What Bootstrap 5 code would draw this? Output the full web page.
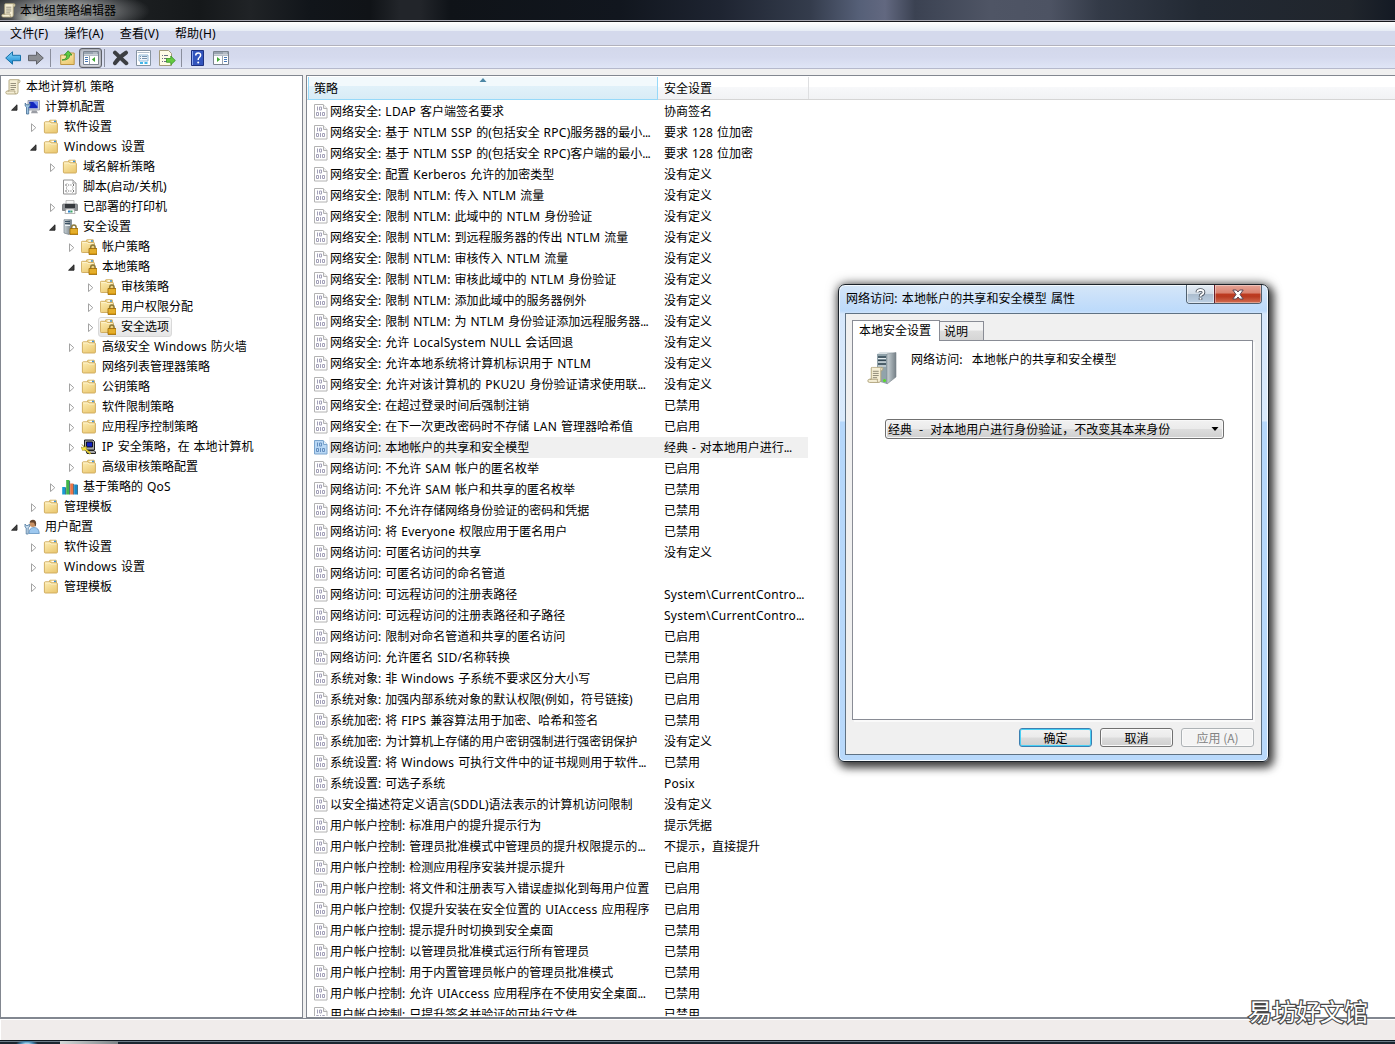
<!DOCTYPE html>
<html lang="zh-CN">

<head>
  <meta charset="UTF-8">
  <meta name="viewport" content="width=device-width, initial-scale=1.0">
  <title>本地组策略编辑器</title>
  <link href="https://cdn.jsdelivr.net/npm/bootstrap@5.3.2/dist/css/bootstrap.min.css" rel="stylesheet">
  <style>
    body {
      height: 1044px;
      overflow: hidden;
      background-color: #f0f0f0;
      color: #000;
      font-family: "Noto Sans", "Noto Sans CJK SC", sans-serif;
      font-size: 12px;
      line-height: 20px;
    }

    svg {
      display: block;
      flex: none;
    }

    .latin {
      letter-spacing: .25px;
      word-spacing: .5px;
    }

    .dots {
      letter-spacing: -.6px;
    }

    /* title bar */
    .titlebar {
      height: 22px;
      padding-left: 1px;
      border-bottom: 1px solid #15161c;
      box-shadow: inset 0 -1px #a3a3ad;
      background:
        radial-gradient(ellipse 20px 12px at 32px 20px, rgba(225, 230, 215, .75), transparent),
        radial-gradient(ellipse 85px 22px at 65px 11px, rgba(145, 147, 148, .95) 35%, rgba(110, 112, 115, .5) 75%, transparent),
        linear-gradient(90deg, #25282b 0, #1b1e20 140px, #15181a 200px, #202326 250px, #11151a 310px, #101317 370px, #22252a 400px, #22252a 420px, #0f1318 450px, #11161e 620px, #1e2431 720px, #343c4c 810px, #566078 860px, #626880 885px, #3b4252 915px, #4f5565 990px, #4d5363 1050px, #333a47 1100px, #222933 1200px, #20252c 1350px, #141a24 1395px);
    }

    .menubar {
      height: 25px;
      padding: 2px 0 0 10px;
      gap: 16px;
      letter-spacing: .15px;
      background: linear-gradient(#fff 0, #e6ecf5 9px, #d4d9ec 9px, #d4d9ec 100%);
      border-bottom: 1px solid #fff;
      box-shadow: inset 0 -1px #b2b2bc;
    }

    .toolbar {
      height: 22px;
      padding-left: 5px;
      background: linear-gradient(#d3d8eb, #d5daee 50%, #dfe5f6);
      border-bottom: 1px solid #b5b9cc;
    }

    .toolbar .divider {
      width: 1px;
      height: 18px;
      background-color: #8a8e9c;
    }

    .pressed {
      width: 23px;
      height: 20px;
      border: 1px solid #5d6068;
      border-radius: 3px;
      background: linear-gradient(#bcc0cc, #d9dce5);
      box-shadow: inset 0 0 2px #777;
    }

    /* panes */
    .panes {
      height: 949px;
      padding-top: 6px;
      gap: 3px;
    }

    .pane {
      background-color: #fff;
      border: 1px solid #828790;
      overflow: hidden;
    }

    .tree-pane {
      width: 303px;
      padding: 1px 0 0 4px;
    }

    .tree-row {
      height: 20px;
    }

    .tree-label {
      padding: 0 3px 0 5px;
    }

    .twisty {
      width: 9px;
      height: 9px;
      margin-right: 5px;
      margin-left: 1px;
    }

    .tree-sel {
      height: 20px;
      margin-left: -2px;
      padding-left: 1px;
      border: 1px solid #d9d9d9;
      border-radius: 3px;
      background: linear-gradient(#fafafa, #e5e5e5);
    }

    .tree-sel .tree-label {
      padding-right: 2px;
      line-height: 18px;
    }

    .list-pane {
      padding-top: 1px;
      border-right: 0;
    }

    .list-head {
      height: 23px;
      line-height: 23px;
      padding-left: 1px;
      background: linear-gradient(#fff 45%, #f7f8fa 45%, #f1f2f4);
      border-bottom: 1px solid #d5d5d5;
    }

    .head-policy {
      width: 350px;
      height: 23px;
      padding-left: 5px;
      background: linear-gradient(#f2f9fc 0, #f2f9fc 42%, #e1f1f9 42%, #d8ecf6);
      border: solid #96d9f9;
      border-width: 0 1px 1px;
    }

    .head-policy svg {
      top: 1px;
      left: 170px;
    }

    .head-setting {
      width: 151px;
      padding-left: 6px;
      border-right: 1px solid #dedfe1;
    }

    .list-body {
      height: 916px;
      padding-top: 1px;
      overflow: hidden;
    }

    .list-row {
      height: 21px;
      line-height: 21px;
      width: 501px;
      padding-left: 7px;
      white-space: nowrap;
    }

    .list-row .cell-fill {
      margin-left: 1px;
    }

    .list-row .policy {
      width: 335px;
      padding-left: 1px;
    }

    .list-row.chosen .cell-fill {
      background-color: #f0f0f0;
    }

    .statusbar {
      height: 22px;
      background-color: #f0eceb;
      border-top: 1px solid #828790;
      box-shadow: inset 0 1px #fff, inset 1px 0 #fff;
    }

    .taskbar {
      height: 4px;
      background: linear-gradient(#111820 0, #111820 1px, #8595a3 1px, #53616e 2px, #1b2630 2px);
    }

    .taskbar .orb {
      width: 22px;
      height: 3px;
      margin-left: 16px;
      background: radial-gradient(ellipse 11px 4px at 11px 3px, #9fd0ea 20%, #3f7ea8 60%, transparent);
    }

    .taskbar .task {
      width: 58px;
      height: 3px;
      margin-left: 22px;
      background: linear-gradient(90deg, #d5d8d8, #7b8387);
    }

    /* properties window */
    .props {
      position: absolute;
      left: 838px;
      top: 284px;
      width: 431px;
      height: 478px;
      padding: 0 6px 6px;
      border: 1px solid #1b2229;
      border-radius: 7px 7px 6px 6px;
      background: linear-gradient(90deg, transparent 0, transparent 8px, rgba(255, 255, 255, .3) 100px, transparent 230px) 0 0 / 100% 29px no-repeat,
        linear-gradient(#d5e6f8 0, #bcdafb 26px, #d6e7fb 29px, #d9eafc 136px, #b5d7fb 137px, #b9d9fb 100%);
      box-shadow: inset 0 0 0 1px #f4faff, 3px 4px 9px 2px rgba(0, 0, 0, .65), 0 0 12px rgba(0, 0, 0, .5);
    }

    .props-title {
      height: 28px;
      padding-left: 1px;
      line-height: 28px;
      letter-spacing: .08px;
      word-spacing: 1px;
    }

    .caption-btns {
      height: 19px;
      border: 1px solid #50606f;
      border-top: 0;
      border-radius: 0 0 4px 4px;
      overflow: hidden;
    }

    .cap-help {
      width: 27px;
      background: linear-gradient(#e5edf5 0, #d2dce7 48%, #abbccd 50%, #bdd0e4);
      box-shadow: inset 0 0 0 1px rgba(255, 255, 255, .5);
    }

    .cap-close {
      width: 47px;
      border-left: 1px solid #68202a;
      background: linear-gradient(#e6a497 0, #d9826f 45%, #bd3a20 50%, #b93b22 65%, #d36e52);
      box-shadow: inset 0 0 0 1px rgba(255, 255, 255, .35);
    }

    .props-body {
      height: 442px;
      padding: 6px 8px 0 6px;
      border: 1px solid #5f7284;
      background-color: #f0f0f0;
      font-family: "Noto Sans CJK SC", sans-serif;
    }

    .sheet-tab {
      height: 20px;
      line-height: 18px;
      border: 1px solid #898c95;
      border-bottom: 0;
    }

    .tab-on {
      width: 88px;
      height: 21px;
      margin-bottom: -1px;
      padding-left: 6px;
      background-color: #fff;
      z-index: 1;
    }

    .tab-off {
      width: 44px;
      height: 19px;
      padding-left: 4px;
      border-left: 0;
      background: linear-gradient(#f3f3f3 45%, #dedede 50%, #d5d5d5);
    }

    .sheet {
      width: 401px;
      height: 380px;
      padding: 10px 0 0 14px;
      border: 1px solid #898c95;
      background-color: #fff;
      box-shadow: 2px 2px #fafafa;
    }

    .combo {
      width: 339px;
      height: 20px;
      margin: 34px 0 0 18px;
      padding: 0 4px 0 2px;
      line-height: 18px;
      border: 1px solid #707070;
      border-radius: 3px;
      background: linear-gradient(#f2f2f2 0, #ebebeb 48%, #dcdcdc 52%, #cfcfcf);
      word-spacing: 4.4px;
      box-shadow: inset 0 0 0 1px #f8f8f8;
    }

    .dlg-btn {
      --bs-btn-padding-x: 0;
      --bs-btn-padding-y: 0;
      --bs-btn-font-size: 12px;
      --bs-btn-border-radius: 3px;
      --bs-btn-border-color: #707070;
      --bs-btn-color: #000;
      --bs-btn-disabled-color: #838383;
      --bs-btn-disabled-border-color: #adb2b5;
      --bs-btn-disabled-opacity: 1;
      width: 73px;
      height: 19px;
      line-height: 16px;
      background: linear-gradient(#f2f2f2 0, #ebebeb 48%, #dcdcdc 52%, #cfcfcf);
      box-shadow: inset 0 0 0 1px #fafafa;
    }

    .dlg-btn.is-default {
      border-color: #3c7fb1;
      box-shadow: inset 0 0 0 1px #48d0f5;
    }

    .dlg-btn:disabled {
      background: #f4f4f4;
    }

    .watermark {
      position: absolute;
      left: 1248px;
      top: 993px;
      font: 24px/36px "Noto Sans CJK SC", sans-serif;
      color: #fff;
      -webkit-text-stroke: 2.4px #4a4a4a;
      paint-order: stroke fill;
    }
  </style>
</head>

<body>
  <svg width="0" height="0" class="position-absolute">
    <defs>
      <linearGradient id="gFolder" x1="0" y1="0" x2="0.6" y2="1">
        <stop offset="0" stop-color="#fdeeb5" />
        <stop offset="1" stop-color="#eccb76" />
      </linearGradient>
      <linearGradient id="gServer" x1="0" x2="1">
        <stop offset="0" stop-color="#c9d2d6" />
        <stop offset="1" stop-color="#758087" />
      </linearGradient>
      <linearGradient id="gBlue" x1="0" y1="0" x2="0" y2="1">
        <stop offset="0" stop-color="#8ad6fa" />
        <stop offset="1" stop-color="#1287d0" />
      </linearGradient>
    </defs>
    <symbol id="i-scroll" viewBox="0 0 16 16">
      <path d="M4 1.500Q4 .7 5 .7h8.500q1.500 0 1.500 1.500T13.500 4H13v9q0 2-2 2H2.500Q.8 15 .8 13.500T2.500 12H4z" fill="#f5eed5" stroke="#b0a57d" stroke-width=".9" />
      <path d="M2.500 12H10q-.8 1.500.5 3M13 4V2q0-1 1-1" fill="none" stroke="#a69b76" stroke-width=".8" />
      <path d="M5.500 4.500h5.500M5.500 6.500h5.500M5.500 8.500h5.500M5.500 10.500h4" stroke="#8c8674" stroke-width=".9" />
    </symbol>
    <symbol id="i-folder" viewBox="0 0 16 16">
      <path d="M6.500 4V1.800q0-.6.600-.6h5.800q.6 0 .6.600V5h-7z" fill="#f3d98c" stroke="#cda95a" stroke-width=".8" />
      <path d="M8.500 2.500h2.500" stroke="#fff" stroke-width="1.400" />
      <path d="M11 2.500h2" stroke="#3f95dd" stroke-width="1.400" />
      <path d="M1.400 3.700q0-.9.900-.9h4.400q.5 0 .9.600t.9.500h5q.9 0 .9.900v8.300q0 .9-.9.900H2.300q-.9 0-.9-.9z" fill="url(#gFolder)" stroke="#cda757" stroke-width=".9" />
      <path d="M2.200 4h4.500l1.300 1h5.500" stroke="#fff8dc" fill="none" stroke-width=".7" />
    </symbol>
    <symbol id="i-lock" viewBox="0 0 16 16">
      <path d="M9.700 10V8.300q0-2.300 2.200-2.300t2.200 2.300V10" fill="none" stroke="#8d7b3e" stroke-width="1.500" />
      <path d="M8 9.500h8V15.500H8z" fill="#d99b12" stroke="#9a6a07" stroke-width=".8" />
      <path d="M8.500 11h7M8.500 13h7" stroke="#f6cd54" stroke-width=".8" />
    </symbol>
    <symbol id="i-lockfolder" viewBox="0 0 16 16">
      <use href="#i-folder" x="-1" y="-.5" width="16" height="16" />
      <use href="#i-lock" />
    </symbol>
    <symbol id="i-server" viewBox="0 0 16 16">
      <path d="M2 .7h7.500V14L7 15.500 2 14z" fill="url(#gServer)" stroke="#73808a" stroke-width=".7" />
      <path d="M3 2.500h5M3 4.500h5" stroke="#3d5264" />
      <path d="M3 6.500h5" stroke="#eef4f8" />
      <use href="#i-lock" />
    </symbol>
    <symbol id="i-computer" viewBox="0 0 16 16">
      <path d="M4 1.500h11.500v9.500H4z" fill="#d2d6df" stroke="#8b909d" stroke-width=".8" />
      <path d="M5.200 2.700h8.500v6.600H5.200z" fill="#1326bd" />
      <path d="M9 2.700h4.700v5z" fill="#6e8df0" />
      <path d="M8 11.500h4.500l1.500 2.700H7z" fill="#9a9da4" />
      <path d="M1.200 4v3l1.300 1.200V15h2.200V8.200L6 7V4L4.700 5.800H2.500z" fill="#9fc5e4" stroke="#426b90" stroke-width=".8" />
    </symbol>
    <symbol id="i-user" viewBox="0 0 16 16">
      <path d="M5 14.500q0-6 5-6t5.300 6z" fill="#9dc8ef" stroke="#5286b8" stroke-width=".7" />
      <circle cx="8.800" cy="4.800" r="3.200" fill="#c99163" />
      <path d="M5.700 3.500Q6 .8 9 .8t3.200 4q0 2-1.200 3 .2-3.500-1.500-4.300z" fill="#64442c" />
      <path d="M1 5v3l1.200 1V15h2V9L5.400 8V5L4.200 6.500h-2z" fill="#c5dcef" stroke="#51799d" stroke-width=".8" />
    </symbol>
    <symbol id="i-script" viewBox="0 0 16 16">
      <path d="M1.500 1h9.500l3 3v11H1.500z" fill="#fff" stroke="#929292" />
      <path d="M11 1v3h3" fill="#e9e9e9" stroke="#929292" stroke-width=".8" />
      <path d="M5 4.500L3.500 6 5 7.500M10.500 4.500L12 6l-1.500 1.500M6 6h1.200M8.300 6h1.200M5 10.500L3.500 12 5 13.500M10.500 10.500L12 12l-1.500 1.500M6 12h1.200M8.300 12h1.200M4 9h1M10.500 9h1" fill="none" stroke="#777" />
    </symbol>
    <symbol id="i-printer" viewBox="0 0 16 16">
      <path d="M4 1.500h8V6H4z" fill="#f5f5f5" stroke="#a7a7a7" stroke-width=".7" />
      <path d="M.5 6q0-1 1-1h13q1 0 1 1v5.500H.5z" fill="#8d9094" stroke="#66686c" stroke-width=".7" />
      <path d="M3 5h10v4H3z" fill="#36393d" />
      <path d="M4 10h8l1 4.500H3z" fill="#fff" stroke="#999" stroke-width=".7" />
      <path d="M6 11.500h2.500v2H6z" fill="#2a83c5" />
      <path d="M8.500 11.500h2v2h-2z" fill="#3fa661" />
    </symbol>
    <symbol id="i-ipsec" viewBox="0 0 16 16">
      <path d="M3.500 1h8.500l1.500 1.500V11h-10z" fill="#a5a5a5" stroke="#222" />
      <path d="M5.500 3h6v5h-6z" fill="#1322c0" stroke="#000" stroke-width=".8" />
      <path d="M5 11.500h8l1.500 1.500v1.500H6z" fill="#aaa" stroke="#222" />
      <path d="M1 5.500L3.500 8l2-.5-.5 2.200 5 4.500-1 1-5-4.200-2.500.5L.2 8l2 1 .8-1z" fill="#ffe83a" stroke="#8a7a10" stroke-width=".5" />
    </symbol>
    <symbol id="i-qos" viewBox="0 0 16 16">
      <path d="M.2 8h3.300v7.500H.2z" fill="#189bd4" />
      <path d="M4.200 1h3.300v14.500H4.200z" fill="#42b649" />
      <path d="M8.200 4.500h3.300v11H8.200z" fill="#ed7547" />
      <path d="M12.200 5.500h3.300v10h-3.300z" fill="#168bca" />
      <path d="M3.600 8.500v7M7.600 2v13.500M11.600 5v10.500M15.600 6v9.500" stroke="#15425b" stroke-width=".7" />
    </symbol>
    <symbol id="i-binary" viewBox="0 0 14 15">
      <path d="M.5.500h8.500l4 4v9.500H.5z" fill="#fff" stroke="#b2b2b2" />
      <path d="M9.500.500V4.500H13" fill="#eee" stroke="#b2b2b2" />
      <path d="M3.500 2.500v4M5.500 3h2v3h-2zM2.500 8.500h2v3h-2zM6.500 8v4M8.500 8.500h2v3h-2z" fill="none" stroke="#a2a0b8" />
    </symbol>
    <symbol id="i-binary-sel" viewBox="0 0 14 15">
      <path d="M.5.500h8.500l4 4v9.500H.5z" fill="#b9d8f5" stroke="#7ba4cc" />
      <path d="M9.500.500V4.500H13" fill="#e1effb" stroke="#7ba4cc" />
      <path d="M3.500 2.500v4M5.500 3h2v3h-2zM2.500 8.500h2v3h-2zM6.500 8v4M8.500 8.500h2v3h-2z" fill="none" stroke="#648ebf" />
    </symbol>
    <symbol id="i-open" viewBox="0 0 9 9">
      <path d="M7 1.800v5.400H1.600z" fill="#404040" stroke="#222" stroke-width=".9" />
    </symbol>
    <symbol id="i-closed" viewBox="0 0 9 9">
      <path d="M2.500.8l4.300 3.900-4.300 3.900z" fill="#fff" stroke="#a2a2a2" />
    </symbol>
    <symbol id="i-pane" viewBox="0 0 16 14">
      <path d="M.5.500h15v13H.5z" fill="#fff" stroke="#7b8490" />
      <path d="M1 1h14v2.500H1z" fill="#98a3b0" />
      <path d="M10.500 2h1M12.500 2h1" stroke="#fff" />
      <path d="M1 4.500h14" stroke="#b5bec9" />
    </symbol>
  </svg>

  <div class="titlebar d-flex align-items-center">
    <svg width="15" height="15"><use href="#i-scroll" /></svg>
    <span class="ps-1">本地组策略编辑器</span>
  </div>

  <nav class="menubar d-flex">
    <span>文件(F)</span>
    <span>操作(A)</span>
    <span>查看(V)</span>
    <span>帮助(H)</span>
  </nav>

  <div class="toolbar d-flex align-items-center">
    <svg width="16" height="14" viewBox="0 0 16 14"><path d="M.7 7L7.500.8v3.500h8v5.400h-8v3.500z" fill="url(#gBlue)" stroke="#1770a8" /></svg>
    <svg width="16" height="14" viewBox="0 0 16 14" style="margin-left:7px"><path d="M15.300 7L8.500.8v3.500h-8v5.400h8v3.500z" fill="#8b8d92" stroke="#5f6167" /></svg>
    <div class="divider" style="margin-left:6px"></div>
    <svg width="15" height="16" viewBox="0 0 15 16" style="margin-left:9px">
      <path d="M.7 5h5.500l1-2h7v11.500H.7z" fill="url(#gFolder)" stroke="#bd9645" />
      <path d="M2 10Q7 9.500 6.800 5H4.300L8.200.8 12 5H9.700Q9.500 10.500 2 10z" fill="#5ecb45" stroke="#2d8d24" stroke-width=".8" />
    </svg>
    <div class="pressed d-flex justify-content-center align-items-center" style="margin-left:4px">
      <svg width="16" height="14" viewBox="0 0 16 14"><use href="#i-pane" width="16" height="14" /><path d="M2 6.500h3M2 8.500h3M2 10.500h3" stroke="#4677b7" /><path d="M6.500 5v8" stroke="#9aa4af" /><path d="M12 6v5L8.800 8.500z" fill="#3da933" /></svg>
    </div>
    <div class="divider" style="margin-left:2px"></div>
    <svg width="17" height="16" viewBox="0 0 17 16" style="margin-left:7px"><path d="M3 2.700q5 5 11.300 10.500M14 2.700Q7 7 3 13.200" fill="none" stroke="#3c3e42" stroke-width="4" stroke-linecap="round" /></svg>
    <svg width="15" height="16" viewBox="0 0 15 16" style="margin-left:7px"><path d="M.5.500h14v15H.5z" fill="#fff" stroke="#8593a2" /><path d="M1.500 2.500h12" stroke="#b1bdca" /><path d="M3 5h9v6H3z" fill="#eff5fb" stroke="#7aa9d1" stroke-width=".8" /><path d="M4 6.500h1M6 6.500h5M4 8.500h1M6 8.500h5" stroke="#7793ad" /><path d="M4 13h3M8.500 13h3" stroke="#42b7ea" stroke-width="2" /></svg>
    <svg width="17" height="16" viewBox="0 0 17 16" style="margin-left:8px"><path d="M.5.500h9l3 3v12H.5z" fill="#fffbe7" stroke="#a39b7c" /><path d="M3 5.500h1M5 5.500h4M3 8.500h1M5 8.500h3M3 11.500h1M5 11.500h3" stroke="#6b6f85" /><path d="M7.500 8.500h4.300V6l4.500 4.500-4.500 4.300v-2.500H7.500z" fill="#65cb41" stroke="#369424" stroke-width=".8" /></svg>
    <div class="divider" style="margin-left:5px"></div>
    <svg width="13" height="16" viewBox="0 0 13 16" style="margin-left:9px"><path d="M.5.500h12v15H.5z" fill="#3254bd" stroke="#1e3180" /><path d="M1.500 1v14" stroke="#8ca7ee" /><path d="M4.700 5.500q0-2.500 2.500-2.500t2.400 2.300q0 1.300-1.300 2.200T7.200 10" fill="none" stroke="#fff" stroke-width="1.500" /><circle cx="7.200" cy="12.500" r="1" fill="#fff" /></svg>
    <svg width="16" height="14" viewBox="0 0 16 14" style="margin-left:9px"><use href="#i-pane" width="16" height="14" /><path d="M11 6.500h3M11 8.500h3M11 10.500h3" stroke="#4677b7" /><path d="M9.500 5v8" stroke="#9aa4af" /><path d="M4 6v5l3.200-2.500z" fill="#3da933" /></svg>
  </div>

  <div class="panes d-flex">
    <div class="pane tree-pane flex-shrink-0" id="tree"></div>
    <div class="pane list-pane flex-grow-1">
      <div class="list-head d-flex">
        <div class="head-policy position-relative">策略
          <svg class="position-absolute" width="8" height="4" viewBox="0 0 8 4"><path d="M4 0l3.500 4h-7z" fill="#4d87a5" /></svg>
        </div>
        <div class="head-setting">安全设置</div>
      </div>
      <div class="list-body" id="policies"></div>
    </div>
  </div>

  <div class="statusbar"></div>
  <div class="taskbar d-flex align-items-end">
    <div class="orb"></div>
    <div class="task"></div>
  </div>

  <div class="props">
    <div class="props-title d-flex justify-content-between">
      <span>网络访问: 本地帐户的共享和安全模型 属性</span>
      <div class="caption-btns d-flex">
        <div class="cap-help d-flex justify-content-center align-items-center">
          <svg width="11" height="13" viewBox="0 0 11 13"><g fill="none" stroke="#4d5560" stroke-width="3.600"><path d="M2.300 4.300Q2.500 2 5.500 2t3 2.300Q8.500 6 6.500 6.700 5.500 7.200 5.500 8.800" /><path d="M5.500 9.800v2" /></g><g fill="none" stroke="#fff" stroke-width="1.800"><path d="M2.300 4.300Q2.500 2 5.500 2t3 2.300Q8.500 6 6.500 6.700 5.500 7.200 5.500 8.500" /><path d="M5.500 9.900v1.600" /></g></svg>
        </div>
        <div class="cap-close d-flex justify-content-center align-items-center">
          <svg width="12" height="11" viewBox="0 0 12 11"><path d="M.8 1h3.500L6 3l1.700-2h3.500L8 5.500l3.200 4.500H7.700L6 8 4.300 10H.8L4 5.500z" fill="#fff" stroke="#5b4654" /></svg>
        </div>
      </div>
    </div>
    <div class="props-body">
      <div class="d-flex align-items-end">
        <div class="sheet-tab tab-on position-relative">本地安全设置</div>
        <div class="sheet-tab tab-off">说明</div>
      </div>
      <div class="sheet">
        <div class="d-flex">
          <svg width="32" height="34" viewBox="0 0 32 34">
            <path d="M10 3l3-2h15l-8 2z" fill="#d9e0e3" />
            <path d="M10 3h10v30l-10-3z" fill="#91a3ab" />
            <path d="M20 3l9-1.500V26l-9 7z" fill="url(#gServer)" stroke="#7a858b" stroke-width=".6" />
            <path d="M11 6h8M11 9.500h8M11 13h8" stroke="#354955" stroke-width="1.300" />
            <path d="M11 7.500h8M11 11h8M11 15h8" stroke="#e6edf0" />
            <circle cx="17.500" cy="29.500" r="1.500" fill="#55dd21" />
            <svg x="0" y="15.500" width="17" height="17"><use href="#i-scroll" /></svg>
          </svg>
          <span style="padding-left:12px;margin-top:-2px;word-spacing:6.500px;letter-spacing:.05px">网络访问: 本地帐户的共享和安全模型</span>
        </div>
        <div class="combo d-flex justify-content-between align-items-center">
          <span>经典 - 对本地用户进行身份验证，不改变其本来身份</span>
          <svg width="8" height="4" viewBox="0 0 8 4"><path d="M.5 0h7L4 4z" /></svg>
        </div>
      </div>
      <div class="d-flex justify-content-end gap-2" style="padding-top:8px;margin-right:-1px">
        <button type="button" class="btn dlg-btn is-default">确定</button>
        <button type="button" class="btn dlg-btn">取消</button>
        <button type="button" class="btn dlg-btn" disabled>应用 (A)</button>
      </div>
    </div>
  </div>

  <div class="watermark">易坊好文馆</div>

  <script>
    // level, state (o = open, c = closed, '' = no arrow), icon, text, selected
    const tree = [
      [0, '', 'scroll', '本地计算机 策略'],
      [1, 'o', 'computer', '计算机配置'],
      [2, 'c', 'folder', '软件设置'],
      [2, 'o', 'folder', 'Windows 设置'],
      [3, 'c', 'folder', '域名解析策略'],
      [3, '', 'script', '脚本(启动/关机)'],
      [3, 'c', 'printer', '已部署的打印机'],
      [3, 'o', 'server', '安全设置'],
      [4, 'c', 'lockfolder', '帐户策略'],
      [4, 'o', 'lockfolder', '本地策略'],
      [5, 'c', 'lockfolder', '审核策略'],
      [5, 'c', 'lockfolder', '用户权限分配'],
      [5, 'c', 'lockfolder', '安全选项', true],
      [4, 'c', 'folder', '高级安全 Windows 防火墙'],
      [4, '', 'folder', '网络列表管理器策略'],
      [4, 'c', 'folder', '公钥策略'],
      [4, 'c', 'folder', '软件限制策略'],
      [4, 'c', 'folder', '应用程序控制策略'],
      [4, 'c', 'ipsec', 'IP 安全策略，在 本地计算机'],
      [4, 'c', 'folder', '高级审核策略配置'],
      [3, 'c', 'qos', '基于策略的 QoS'],
      [2, 'c', 'folder', '管理模板'],
      [1, 'o', 'user', '用户配置'],
      [2, 'c', 'folder', '软件设置'],
      [2, 'c', 'folder', 'Windows 设置'],
      [2, 'c', 'folder', '管理模板']
    ];

    const policies = [
      ['网络安全: LDAP 客户端签名要求', '协商签名'],
      ['网络安全: 基于 NTLM SSP 的(包括安全 RPC)服务器的最小...', '要求 128 位加密'],
      ['网络安全: 基于 NTLM SSP 的(包括安全 RPC)客户端的最小...', '要求 128 位加密'],
      ['网络安全: 配置 Kerberos 允许的加密类型', '没有定义'],
      ['网络安全: 限制 NTLM: 传入 NTLM 流量', '没有定义'],
      ['网络安全: 限制 NTLM: 此域中的 NTLM 身份验证', '没有定义'],
      ['网络安全: 限制 NTLM: 到远程服务器的传出 NTLM 流量', '没有定义'],
      ['网络安全: 限制 NTLM: 审核传入 NTLM 流量', '没有定义'],
      ['网络安全: 限制 NTLM: 审核此域中的 NTLM 身份验证', '没有定义'],
      ['网络安全: 限制 NTLM: 添加此域中的服务器例外', '没有定义'],
      ['网络安全: 限制 NTLM: 为 NTLM 身份验证添加远程服务器...', '没有定义'],
      ['网络安全: 允许 LocalSystem NULL 会话回退', '没有定义'],
      ['网络安全: 允许本地系统将计算机标识用于 NTLM', '没有定义'],
      ['网络安全: 允许对该计算机的 PKU2U 身份验证请求使用联...', '没有定义'],
      ['网络安全: 在超过登录时间后强制注销', '已禁用'],
      ['网络安全: 在下一次更改密码时不存储 LAN 管理器哈希值', '已启用'],
      ['网络访问: 本地帐户的共享和安全模型', '经典 - 对本地用户进行...'],
      ['网络访问: 不允许 SAM 帐户的匿名枚举', '已启用'],
      ['网络访问: 不允许 SAM 帐户和共享的匿名枚举', '已禁用'],
      ['网络访问: 不允许存储网络身份验证的密码和凭据', '已禁用'],
      ['网络访问: 将 Everyone 权限应用于匿名用户', '已禁用'],
      ['网络访问: 可匿名访问的共享', '没有定义'],
      ['网络访问: 可匿名访问的命名管道', ''],
      ['网络访问: 可远程访问的注册表路径', 'System\\CurrentContro...'],
      ['网络访问: 可远程访问的注册表路径和子路径', 'System\\CurrentContro...'],
      ['网络访问: 限制对命名管道和共享的匿名访问', '已启用'],
      ['网络访问: 允许匿名 SID/名称转换', '已禁用'],
      ['系统对象: 非 Windows 子系统不要求区分大小写', '已启用'],
      ['系统对象: 加强内部系统对象的默认权限(例如，符号链接)', '已启用'],
      ['系统加密: 将 FIPS 兼容算法用于加密、哈希和签名', '已禁用'],
      ['系统加密: 为计算机上存储的用户密钥强制进行强密钥保护', '没有定义'],
      ['系统设置: 将 Windows 可执行文件中的证书规则用于软件...', '已禁用'],
      ['系统设置: 可选子系统', 'Posix'],
      ['以安全描述符定义语言(SDDL)语法表示的计算机访问限制', '没有定义'],
      ['用户帐户控制: 标准用户的提升提示行为', '提示凭据'],
      ['用户帐户控制: 管理员批准模式中管理员的提升权限提示的...', '不提示，直接提升'],
      ['用户帐户控制: 检测应用程序安装并提示提升', '已启用'],
      ['用户帐户控制: 将文件和注册表写入错误虚拟化到每用户位置', '已启用'],
      ['用户帐户控制: 仅提升安装在安全位置的 UIAccess 应用程序', '已启用'],
      ['用户帐户控制: 提示提升时切换到安全桌面', '已禁用'],
      ['用户帐户控制: 以管理员批准模式运行所有管理员', '已禁用'],
      ['用户帐户控制: 用于内置管理员帐户的管理员批准模式', '已禁用'],
      ['用户帐户控制: 允许 UIAccess 应用程序在不使用安全桌面...', '已禁用'],
      ['用户帐户控制: 只提升签名并验证的可执行文件', '已禁用']
    ];
    const chosen = 16;

    function format(text) {
      return text
        .replace(/[A-Za-z0-9\\: ]+/g, '<span class="latin">$&</span>')
        .replace('...', '<span class="dots">...</span>');
    }

    document.getElementById('tree').innerHTML = tree.map(([level, state, icon, text, selected]) => {
      const arrow = state ? `<svg width="9" height="9"><use href="#i-${state === 'o' ? 'open' : 'closed'}" /></svg>` : '';
      const twisty = level ? `<div class="twisty">${arrow}</div>` : '';
      const indent = level ? level * 19 - 15 : 0;
      return `
        <div class="tree-row d-flex align-items-center" style="padding-left:${indent}px">
          ${twisty}
          <div class="d-flex align-items-center ${selected ? 'tree-sel' : ''}">
            <svg width="16" height="16"><use href="#i-${icon}" /></svg>
            <span class="tree-label">${format(text)}</span>
          </div>
        </div>`;
    }).join('');

    document.getElementById('policies').innerHTML = policies.map(([name, value], i) => `
      <div class="list-row d-flex align-items-center ${i === chosen ? 'chosen' : ''}">
        <svg width="14" height="15"><use href="#i-binary${i === chosen ? '-sel' : ''}" /></svg>
        <div class="cell-fill d-flex flex-grow-1">
          <span class="policy flex-shrink-0">${format(name)}</span>
          <span>${format(value)}</span>
        </div>
      </div>`).join('');
  </script>

  <script src="https://cdn.jsdelivr.net/npm/bootstrap@5.3.2/dist/js/bootstrap.bundle.min.js"></script>
</body>

</html>
